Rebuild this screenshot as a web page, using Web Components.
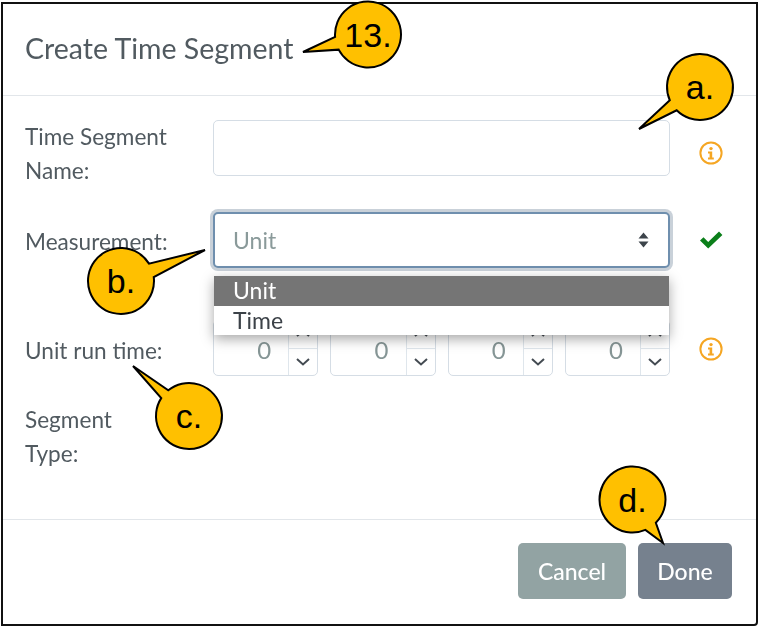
<!DOCTYPE html>
<html><head><meta charset="utf-8"><style>
html,body{margin:0;background:#fff;width:760px;height:626px;overflow:hidden}
body{font-family:Lato,"Noto Sans",sans-serif}
</style></head><body>
<time-dialog>
  <span slot="title">Create Time Segment</span>
  <form-row label="Time Segment|Name:" status="info" style="height:56px;margin-top:24px;--i:5px"><text-box></text-box></form-row>
  <form-row label="Measurement:" status="ok" style="height:56px;margin-top:36px;--o:13px"><select-box value="Unit"></select-box></form-row>
  <form-row label="Unit run time:" status="info" style="height:56px;margin-top:52px;--o:14px;--i:1px"><span style="display:grid;grid-template-columns:repeat(4,1fr);gap:12px;height:100%"><spin-box></spin-box><spin-box></spin-box><spin-box></spin-box><spin-box></spin-box></span></form-row>
  <form-row label="Segment|Type:" style="height:56px;margin-top:26px;--o:1px"></form-row>
  <action-button slot="actions" bg="#92a3a3" w="108">Cancel</action-button>
  <action-button slot="actions" bg="#76818e" w="94">Done</action-button>
  <drop-menu slot="overlay" style="left:211px;top:272px"></drop-menu>
</time-dialog>
<call-out c="368 34.500" tip="303 52" p="333 37 338 50">13.</call-out>
<call-out c="700 87" tip="639 129" p="668 101 677 110">a.</call-out>
<call-out c="121 281" tip="205 250" p="154 277 150 263">b.</call-out>
<call-out c="189 416" tip="133 366" p="168 390 161 398">c.</call-out>
<call-out c="632.500 499.500" tip="663 543" p="645 529 656 523">d.</call-out>
<script>
const el=(name,html)=>customElements.define(name,class extends HTMLElement{
  constructor(){super();this.attachShadow({mode:'open'}).innerHTML=html(this)}
});
const FONT='font-family:Lato,"Noto Sans",sans-serif;';
el('time-dialog',()=>`<style>
:host{display:block;position:absolute;left:1px;top:2px;width:757px;height:624px;box-sizing:border-box;border:2px solid #111;border-bottom-right-radius:4px;background:#fff;${FONT}color:#4f5860;filter:blur(.35px)}
.wrap{display:flex;flex-direction:column;height:100%;position:relative}
header{height:92px;border-bottom:1.5px solid #e2e6ea;box-sizing:border-box;padding:26px 0 0 22px;font-size:28.500px;line-height:36px;color:#515a60;flex:none}
main{flex:1;min-height:0}
footer{flex:none;height:105.500px;box-sizing:border-box;border-top:1.5px solid #e2e6ea;padding:23px 24px 0 0;display:flex;justify-content:flex-end;gap:12px}
</style><div class="wrap"><header><slot name="title"></slot></header><main><slot></slot></main><footer><slot name="actions"></slot></footer><slot name="overlay"></slot></div>`);
el('form-row',h=>{
 const s=h.getAttribute('status');
 const icon=s==='info'?`<svg width="24" height="24" viewBox="0 0 24 24"><circle cx="12" cy="12" r="10.600" fill="none" stroke="#f5a623" stroke-width="2"/><circle cx="12" cy="7.600" r="1.700" fill="#f5a623"/><path d="M9 10.600h4.200v6h1.600v2H9v-2h1.600v-4H9z" fill="#f5a623"/></svg>`:s==='ok'?`<svg width="24" height="20" viewBox="0 0 24 20"><path d="M1 10.500l3.500-3.200 4.700 4.600L20 1.600 23.400 5 9.200 18.600z" fill="#0b7f1a"/></svg>`:'';
 return `<style>:host{display:grid;grid-template-columns:210px 457px 1fr;font-size:22.600px;line-height:34px;color:#515a60}
 .l{padding:var(--o,0) 0 0 22px;white-space:nowrap}.c{min-width:0}.i{display:flex;align-items:center;justify-content:center;margin-right:4px;height:56px;position:relative;top:var(--i,0)}</style>
 <div class="l">${h.getAttribute('label').split('|').join('<br>')}</div><div class="c"><slot></slot></div><div class="i">${icon}</div>`});
el('text-box',()=>`<style>:host{display:block;height:56px;box-sizing:border-box;border:1.5px solid #d5dde5;border-radius:5px;background:#fff}</style>`);
el('select-box',h=>`<style>:host{display:flex;align-items:center;justify-content:space-between;height:56px;box-sizing:border-box;border:2px solid #6f8fae;border-radius:5px;background:#fff;box-shadow:0 0 0 3px #c9d1d9;padding:0 19px 0 18px;font-size:23px;color:#8a9a9a;${FONT}}</style><span>${h.getAttribute('value')}</span><svg width="11" height="16" viewBox="0 0 11 16"><path d="M5.500 0.500L10.500 6.500H0.500zM5.500 15.500L0.500 9.500H10.500z" fill="#3d444b"/></svg>`);
el('spin-box',()=>`<style>:host{display:grid;grid-template-columns:1fr 28px;grid-template-rows:28px 1fr;height:56px;box-sizing:border-box;border:1.5px solid #d5dde5;border-radius:5px;background:#fff;${FONT}}
.v{grid-row:1/3;border-right:1.5px solid #dfe6ec;text-align:right;padding-right:17px;font-size:24px;line-height:57px;color:#869696}
.u{border-bottom:1.5px solid #dfe6ec;display:flex;align-items:center;justify-content:center;padding-bottom:3px;box-sizing:border-box}.d{display:flex;align-items:center;justify-content:center}
svg{display:block}</style><div class="v">0</div><div class="u"><svg width="14" height="8" viewBox="0 0 14 8"><path d="M1 7l6-5.500 6 5.500" fill="none" stroke="#444b52" stroke-width="2"/></svg></div><div class="d"><svg width="14" height="8" viewBox="0 0 14 8"><path d="M1 1l6 5.500 6-5.500" fill="none" stroke="#444b52" stroke-width="2"/></svg></div>`);
el('action-button',h=>`<style>:host{display:flex;align-items:center;justify-content:center;width:${h.getAttribute('w')}px;height:56px;border-radius:5px;background:${h.getAttribute('bg')};color:#fff;font-size:23px;font-weight:500;${FONT}}</style><slot></slot>`);
el('drop-menu',()=>`<style>:host{display:block;position:absolute;width:455px;background:#fff;box-shadow:0 4px 12px rgba(0,0,0,.35);font-size:23px;${FONT}}
div{height:29.500px;line-height:29px;padding-left:19px;color:#3c4248}div.on{background:#757575;color:#fff}div+div{line-height:28px}</style><div class="on">Unit</div><div>Time</div>`);
el('call-out',h=>{
 const [cx,cy]=h.getAttribute('c').split(' ').map(Number),[tx,ty]=h.getAttribute('tip').split(' ').map(Number),[x1,y1,x2,y2]=h.getAttribute('p').split(' ').map(Number);
 const r=33;
 const snap=(x,y)=>{const a=Math.atan2(y-cy,x-cx);return [(cx+r*Math.cos(a)).toFixed(2),(cy+r*Math.sin(a)).toFixed(2)]};
 const a=snap(x1,y1),b=snap(x2,y2);
 return `<style>:host{display:block;position:absolute;left:0;top:0;width:760px;height:626px;pointer-events:none}svg{position:absolute;left:0;top:0}
 .t{position:absolute;left:${cx-40}px;top:${cy-30}px;width:80px;height:60px;line-height:60px;text-align:center;font-family:"Liberation Sans",Arial,sans-serif;font-size:34px;color:#000}</style>
 <svg width="760" height="626"><path d="M${tx} ${ty}L${a[0]} ${a[1]}A${r} ${r} 0 1 1 ${b[0]} ${b[1]}Z" fill="#ffc000" stroke="#000" stroke-width="2"/></svg><div class="t"><slot></slot></div>`;
});
</script>
</body></html>
